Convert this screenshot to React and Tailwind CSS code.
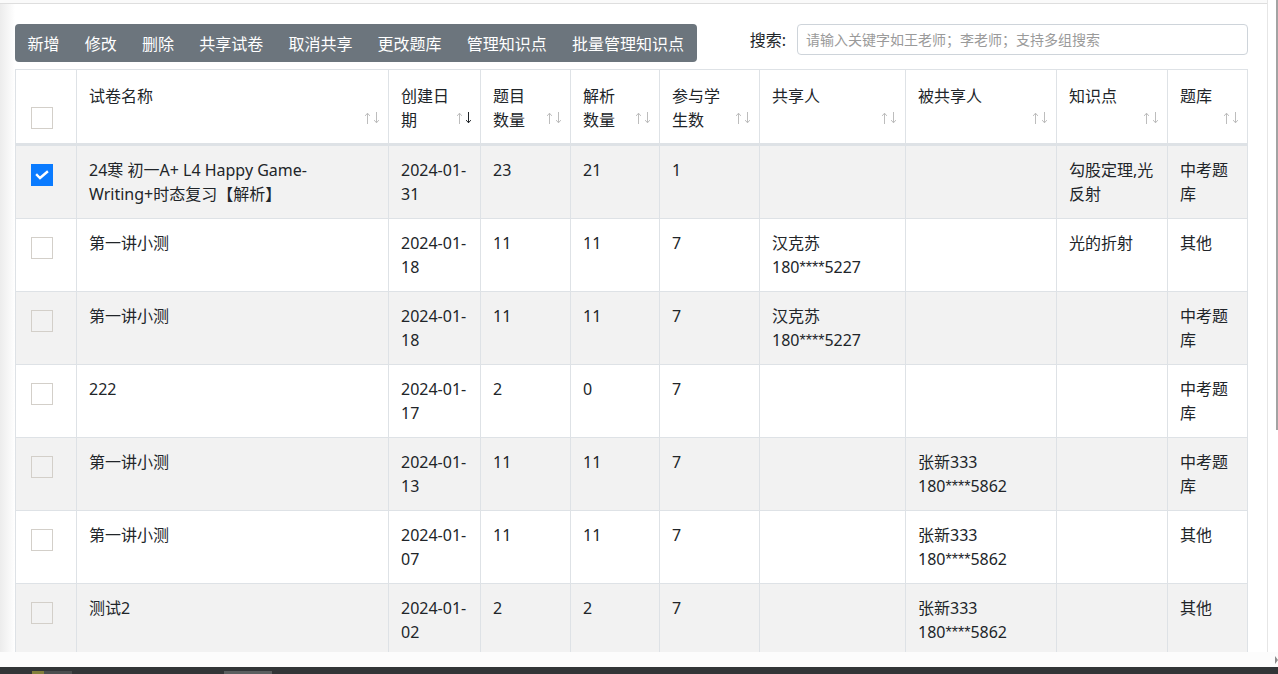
import React from "react";

const COLS = "grid-cols-[61px_312px_92px_90px_89px_100px_146px_151px_111px_80px]";

function SortIcon({ active }) {
  return (
    <svg width="15" height="12" viewBox="0 0 15 12" className="shrink-0 mt-[28px]">
      <g fill="none" strokeWidth="1" strokeLinecap="square">
        <g stroke="#bdbdbd">
          <path d="M2.5 1.5 V11.5" />
          <path d="M0.5 3.5 L2.5 1.2 L4.5 3.5" />
        </g>
        <g stroke={active ? "#212529" : "#bdbdbd"}>
          <path d="M11.5 0.5 V10.5" />
          <path d="M9.5 8.5 L11.5 10.8 L13.5 8.5" />
        </g>
      </g>
    </svg>
  );
}

function Checkbox({ checked, className = "" }) {
  if (checked) {
    return (
      <div className={"w-[22px] h-[22px] bg-[#0a7bff] flex items-center justify-center " + className}>
        <svg width="22" height="22" viewBox="0 0 22 22">
          <path d="M6 11 L9 14 L16 8" fill="none" stroke="#fff" strokeWidth="2.4" strokeLinecap="square" />
        </svg>
      </div>
    );
  }
  return <div className={"w-[22px] h-[22px] border border-[#d3cfc9] " + className} />;
}

function Line({ text }) {
  if (text.includes("****")) {
    const [a, b] = text.split("****");
    return (
      <div>
        {a}
        <span className="font-['Liberation_Sans',sans-serif]">****</span>
        {b}
      </div>
    );
  }
  return <div>{text}</div>;
}

const headers = [
  { t: ["试卷名称"] },
  { t: ["创建日", "期"], active: true },
  { t: ["题目", "数量"] },
  { t: ["解析", "数量"] },
  { t: ["参与学", "生数"] },
  { t: ["共享人"] },
  { t: ["被共享人"] },
  { t: ["知识点"] },
  { t: ["题库"] },
];

const rows = [
  {
    checked: true,
    c: [
      ["24寒 初一A+ L4 Happy Game-", "Writing+时态复习【解析】"],
      ["2024-01-", "31"],
      ["23"],
      ["21"],
      ["1"],
      [],
      [],
      ["勾股定理,光", "反射"],
      ["中考题", "库"],
    ],
  },
  {
    c: [
      ["第一讲小测"],
      ["2024-01-", "18"],
      ["11"],
      ["11"],
      ["7"],
      ["汉克苏", "180****5227"],
      [],
      ["光的折射"],
      ["其他"],
    ],
  },
  {
    c: [
      ["第一讲小测"],
      ["2024-01-", "18"],
      ["11"],
      ["11"],
      ["7"],
      ["汉克苏", "180****5227"],
      [],
      [],
      ["中考题", "库"],
    ],
  },
  {
    c: [
      ["222"],
      ["2024-01-", "17"],
      ["2"],
      ["0"],
      ["7"],
      [],
      [],
      [],
      ["中考题", "库"],
    ],
  },
  {
    c: [
      ["第一讲小测"],
      ["2024-01-", "13"],
      ["11"],
      ["11"],
      ["7"],
      [],
      ["张新333", "180****5862"],
      [],
      ["中考题", "库"],
    ],
  },
  {
    c: [
      ["第一讲小测"],
      ["2024-01-", "07"],
      ["11"],
      ["11"],
      ["7"],
      [],
      ["张新333", "180****5862"],
      [],
      ["其他"],
    ],
  },
  {
    c: [
      ["测试2"],
      ["2024-01-", "02"],
      ["2"],
      ["2"],
      ["7"],
      [],
      ["张新333", "180****5862"],
      [],
      ["其他"],
    ],
  },
];

const buttons = ["新增", "修改", "删除", "共享试卷", "取消共享", "更改题库", "管理知识点", "批量管理知识点"];

export default function App() {
  return (
    <div className="w-[1278px] h-[674px] overflow-hidden flex flex-col bg-white text-[#212529] text-[16px] leading-6 font-['Noto_Sans','Noto_Sans_CJK_SC',sans-serif]">
      <div className="h-[652px] flex overflow-hidden">
        <div className="w-[1268px] h-full border-r border-[#e6e6e6] flex flex-col">
          <div className="h-[3px] bg-[#fafafa] shrink-0" />
          <div className="h-px bg-[#dedede] shrink-0" />
          <div className="flex flex-1 min-h-0">
            <div className="w-[15px] shrink-0 bg-gradient-to-r from-[#ececec] to-white" />
            <div className="pt-[20px] w-[1233px]">
              <div className="flex justify-between items-start">
                <div className="flex h-[38px] rounded-[4px] bg-[#6c757d] text-white items-center pt-px">
                  {buttons.map((b) => (
                    <div key={b} className="px-[12.6px] whitespace-nowrap">{b}</div>
                  ))}
                </div>
                <div className="flex items-center gap-[11px] h-[31px]">
                  <span className="whitespace-nowrap">搜索:</span>
                  <div className="w-[451px] h-[31px] border border-[#ced4da] rounded-[4px] px-[8px] flex items-center text-[14px] text-[#9a9a9a] whitespace-nowrap">
                    请输入关键字如王老师；李老师；支持多组搜索
                  </div>
                </div>
              </div>

              <div className={"mt-[7px] grid " + COLS + " border-l border-t border-[#dee2e6] w-[1233px]"}>
                <div className="h-[76px] border-r border-b-[3px] border-[#dee2e6] pl-[15px] pt-[14px]">
                  <Checkbox className="mt-[23px]" />
                </div>
                {headers.map((h, i) => (
                  <div key={i} className="h-[76px] border-r border-b-[3px] border-[#dee2e6] pl-[12px] pr-[8px] pt-[14px] flex justify-between">
                    <div className="whitespace-nowrap">
                      {h.t.map((l, j) => (
                        <div key={j}>{l}</div>
                      ))}
                    </div>
                    <SortIcon active={h.active} />
                  </div>
                ))}

                {rows.map((r, ri) => {
                  const bg = ri % 2 === 0 ? "bg-[#f2f2f2]" : "bg-white";
                  return (
                    <React.Fragment key={ri}>
                      <div className={"h-[73px] border-r border-b border-[#dee2e6] pl-[15px] pt-[12px] " + bg}>
                        <Checkbox checked={r.checked} className="mt-[6px]" />
                      </div>
                      {r.c.map((cell, ci) => (
                        <div key={ci} className={"h-[73px] border-r border-b border-[#dee2e6] px-[12px] pt-[12px] whitespace-nowrap " + bg}>
                          {cell.map((l, j) => (
                            <Line key={j} text={l} />
                          ))}
                        </div>
                      ))}
                    </React.Fragment>
                  );
                })}
              </div>
            </div>
          </div>
        </div>
        <div className="flex-1 flex justify-end">
          <div className="w-[2px] h-[430px] bg-[#a3a3a3]" />
        </div>
      </div>
      <div className="h-[15px] bg-[#fcfcfc] flex justify-end items-center">
        <svg width="3" height="8" viewBox="0 0 3 8">
          <path d="M0 0 L3 4 L0 8 Z" fill="#8c8c8c" />
        </svg>
      </div>
      <div className="h-[7px] bg-[#323537] flex items-end">
        <div className="ml-[32px] w-[12px] h-[3px] bg-[#827f3b]" />
        <div className="w-[28px] h-[3px] bg-[#4b4f50]" />
        <div className="ml-[152px] w-[48px] h-[3px] bg-[#5b5f60]" />
      </div>
    </div>
  );
}
